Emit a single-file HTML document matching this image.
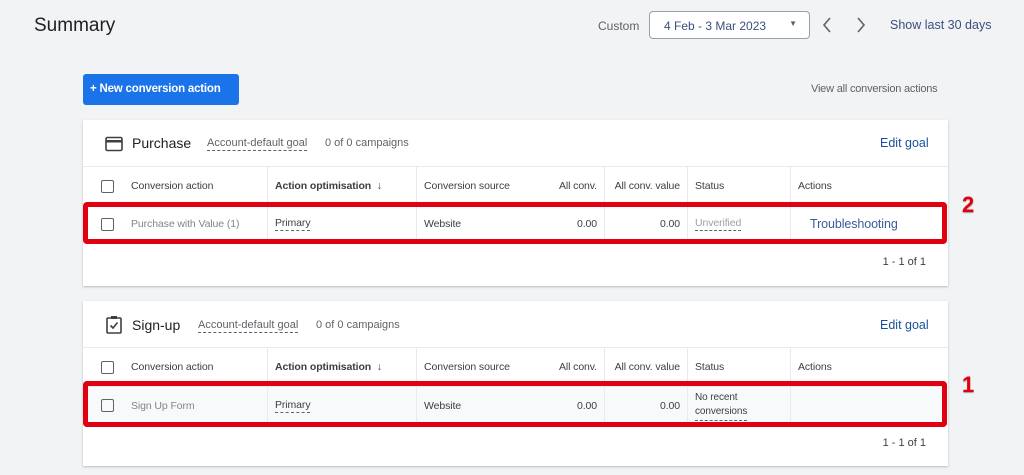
<!DOCTYPE html>
<html><head><meta charset="utf-8"><style>
*{box-sizing:border-box;margin:0;padding:0}
body{width:1024px;height:475px;overflow:hidden;background:#f1f3f4;font-family:"Liberation Sans",Arial,sans-serif;color:#3c4043;position:relative}
.abs{position:absolute;white-space:nowrap}
.card{position:absolute;left:83px;width:865px;background:#fff;box-shadow:0 1px 2px rgba(60,64,67,.3)}
.row{position:absolute;left:0;width:865px;border-top:1px solid #e8eaed}
.cell{position:absolute;top:0;height:100%;display:flex;align-items:center;font-size:10.5px;padding:0 7px;border-left:1px solid #e8eaed;white-space:nowrap;letter-spacing:-0.1px}
.hd{color:#3c4043}
.cb{position:absolute;left:18px;width:13px;height:13px;border:1.5px solid #5f6368;border-radius:2px}
.dash{border-bottom:1px dashed #5f6368;padding-bottom:1px}
.red{position:absolute;left:83px;width:864px;border:5px solid #e0000f;border-radius:4px}
.num{position:absolute;left:962px;font-size:22px;font-weight:bold;color:#e0000f;text-shadow:0 1px 1px #999}
</style></head><body>
<div class="abs" style="left:34px;top:15px;font-size:19px;color:#202124">Summary</div>
<div class="abs" style="left:598px;top:19px;font-size:12px;color:#5f6368">Custom</div>
<div class="abs" style="left:649px;top:11px;width:161px;height:28px;border:1px solid #9aa0a6;border-radius:4px;background:#fff;font-size:12px;color:#3c4f7c;padding:7px 0 0 14px">4 Feb - 3 Mar 2023<span style="position:absolute;right:12px;top:7px;font-size:8px;color:#5f6368">▼</span></div>
<svg class="abs" style="left:820px;top:16px" width="14" height="18"><path d="M10 2 L4 9 L10 16" stroke="#5f6368" stroke-width="1.6" fill="none"/></svg>
<svg class="abs" style="left:854px;top:16px" width="14" height="18"><path d="M4 2 L10 9 L4 16" stroke="#5f6368" stroke-width="1.6" fill="none"/></svg>
<div class="abs" style="left:890px;top:18px;font-size:12.5px;color:#3c4f7c">Show last 30 days</div>
<div class="abs" style="left:83px;top:74px;width:156px;height:31px;background:#1a73e8;border-radius:3px;color:#fff;font-size:11.5px;font-weight:bold;padding:9px 0 0 7px;letter-spacing:-0.2px">+ New conversion action</div>
<div class="abs" style="left:811px;top:83px;font-size:11px;color:#5f6368;letter-spacing:-0.2px">View all conversion actions</div>

<div class="card" style="top:120px;height:166px">
<svg class="abs" style="left:22px;top:16px" width="18" height="16"><rect x="1" y="1.5" width="16" height="13" rx="1.5" fill="none" stroke="#3c4043" stroke-width="1.6"/><rect x="1" y="4" width="16" height="2.5" fill="#3c4043"/></svg>
<div class="abs" style="left:49px;top:15px;font-size:14px;color:#202124">Purchase</div>
<div class="abs dash" style="left:124px;top:17px;font-size:11px;color:#5f6368">Account-default goal</div>
<div class="abs" style="left:242px;top:17px;font-size:11px;color:#5f6368">0 of 0 campaigns</div>
<div class="abs" style="left:797px;top:16px;font-size:12.5px;color:#1a4f9c">Edit goal</div>
<div class="row" style="top:46px;height:39px">
<div class="cb" style="top:13px"></div>
<div class="cell hd" style="left:0;border:0;padding-left:48px">Conversion action</div>
<div class="cell hd" style="left:184px;width:149px;font-weight:bold">Action optimisation&nbsp;&nbsp;↓</div>
<div class="cell hd" style="left:333px;width:105px">Conversion source</div>
<div class="cell hd" style="left:438px;width:83px;justify-content:flex-end;border:0">All conv.</div>
<div class="cell hd" style="left:521px;width:83px;justify-content:flex-end">All conv. value</div>
<div class="cell hd" style="left:604px;width:103px">Status</div>
<div class="cell hd" style="left:707px;width:158px">Actions</div>
</div>
<div class="row" style="top:85px;height:37px">
<div class="cb" style="top:12px"></div>
<div class="cell" style="left:0;border:0;padding-left:48px;color:#80868b">Purchase with Value (1)</div>
<div class="cell" style="left:184px;width:149px"><span class="dash">Primary</span></div>
<div class="cell" style="left:333px;width:105px">Website</div>
<div class="cell" style="left:438px;width:83px;justify-content:flex-end;border:0">0.00</div>
<div class="cell" style="left:521px;width:83px;justify-content:flex-end">0.00</div>
<div class="cell" style="left:604px;width:103px;color:#9aa0a6"><span class="dash">Unverified</span></div>
<div class="cell" style="left:707px;width:158px;font-size:12.5px;color:#3c5a99;padding-left:19px">Troubleshooting</div>
</div>
<div class="row" style="top:122px;height:44px"><div class="abs" style="right:22px;top:13px;font-size:11px">1 - 1 of 1</div></div>
</div>
<div class="red" style="top:202px;height:42px"></div>
<div class="num" style="top:192px">2</div>

<div class="card" style="top:301px;height:165px">
<svg class="abs" style="left:23px;top:14px" width="16" height="19"><rect x="1" y="3" width="14" height="15" rx="1" fill="none" stroke="#3c4043" stroke-width="1.6"/><rect x="5" y="1" width="6" height="3" fill="#3c4043"/><path d="M4.5 10.5 L7 13 L11.5 7.5" stroke="#3c4043" stroke-width="1.6" fill="none"/></svg>
<div class="abs" style="left:49px;top:16px;font-size:14px;color:#202124">Sign-up</div>
<div class="abs dash" style="left:115px;top:18px;font-size:11px;color:#5f6368">Account-default goal</div>
<div class="abs" style="left:233px;top:18px;font-size:11px;color:#5f6368">0 of 0 campaigns</div>
<div class="abs" style="left:797px;top:17px;font-size:12.5px;color:#1a4f9c">Edit goal</div>
<div class="row" style="top:46px;height:39px">
<div class="cb" style="top:13px"></div>
<div class="cell hd" style="left:0;border:0;padding-left:48px">Conversion action</div>
<div class="cell hd" style="left:184px;width:149px;font-weight:bold">Action optimisation&nbsp;&nbsp;↓</div>
<div class="cell hd" style="left:333px;width:105px">Conversion source</div>
<div class="cell hd" style="left:438px;width:83px;justify-content:flex-end;border:0">All conv.</div>
<div class="cell hd" style="left:521px;width:83px;justify-content:flex-end">All conv. value</div>
<div class="cell hd" style="left:604px;width:103px">Status</div>
<div class="cell hd" style="left:707px;width:158px">Actions</div>
</div>
<div class="row" style="top:85px;height:38px;background:#f8f9fa">
<div class="cb" style="top:12px"></div>
<div class="cell" style="left:0;border:0;padding-left:48px;color:#80868b">Sign Up Form</div>
<div class="cell" style="left:184px;width:149px"><span class="dash">Primary</span></div>
<div class="cell" style="left:333px;width:105px">Website</div>
<div class="cell" style="left:438px;width:83px;justify-content:flex-end;border:0">0.00</div>
<div class="cell" style="left:521px;width:83px;justify-content:flex-end">0.00</div>
<div class="cell" style="left:604px;width:103px;line-height:14px;font-size:10px"><span class="dash">No recent<br>conversions</span></div>
<div class="cell" style="left:707px;width:158px"></div>
</div>
<div class="row" style="top:123px;height:42px"><div class="abs" style="right:22px;top:12px;font-size:11px">1 - 1 of 1</div></div>
</div>
<div class="red" style="top:381px;height:46px"></div>
<div class="num" style="top:372px">1</div>
</body></html>
